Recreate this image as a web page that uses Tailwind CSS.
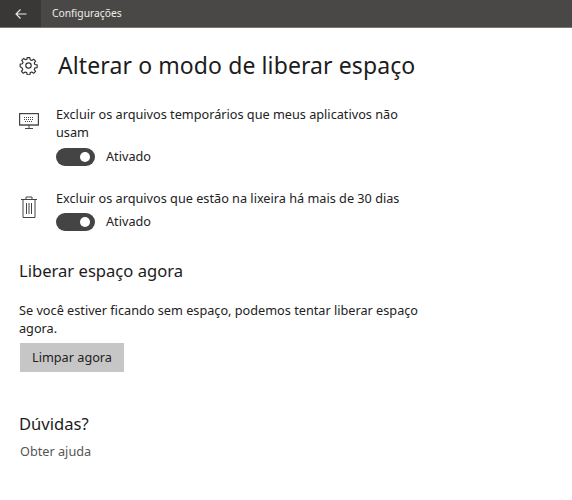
<!DOCTYPE html>
<html lang="pt"><head><meta charset="utf-8"><script src="https://cdn.jsdelivr.net/npm/@tailwindcss/browser@4"></script></head>
<body class="bg-white w-[572px] h-[500px] overflow-hidden font-['Noto_Sans','Open_Sans',sans-serif] text-[#222]">
<header class="h-[28px] bg-[#4a4846] flex items-center border-b border-[#777]">
  <div class="w-[41px] h-full bg-[#3a3836] flex items-center justify-center">
    <svg width="12" height="12" viewBox="0 0 12 12" fill="none" stroke="#eee" stroke-width="1.1"><path d="M11.500 6H1M5.500 1.500 1 6l4.500 4.500"/></svg>
  </div>
  <span class="ml-[11px] text-[10.3px] text-[#eee]">Configurações</span>
</header>
<main class="pl-[19px]">
  <div class="flex items-center mt-[22px] h-[30px]">
    <svg width="19" height="19" viewBox="0 0 24 24" fill="none" stroke="#333" stroke-width="1.5" stroke-linejoin="round"><circle cx="12" cy="12" r="3.4"/><path d="M10.300 2h3.400l.5 2.800 1.900.8 2.400-1.600 2.400 2.400-1.600 2.400.8 1.900 2.800.5v3.400l-2.800.5-.8 1.900 1.600 2.400-2.400 2.400-2.400-1.600-1.900.8-.5 2.800h-3.400l-.5-2.800-1.900-.8-2.400 1.600-2.400-2.400 1.600-2.400-.8-1.900L1.500 13.700v-3.400l2.800-.5.8-1.900L3.500 5.500l2.400-2.400 2.400 1.600 1.900-.8z"/></svg>
    <h1 class="ml-[20px] text-[23px] leading-[30px] text-[#1c1c1c] tracking-[0.1px]">Alterar o modo de liberar espaço</h1>
  </div>
  <section class="flex mt-[25px]">
    <svg class="mt-[8px] shrink-0" width="20" height="18" viewBox="0 0 20 18" fill="none" stroke="#444"><rect x=".5" y=".5" width="19" height="11.500" stroke-width="1.400"/><path d="M10 12v3M6 15.500h8"/><path d="M5 4.500h10M5 6.500h10M6 8.500h8" stroke-dasharray="1 1"/></svg>
    <div class="ml-[17px]">
      <p class="w-[352px] text-[12.7px] leading-[18px]">Excluir os arquivos temporários que meus aplicativos não usam</p>
      <div class="flex items-center mt-[6px]">
        <div class="w-[39px] h-[18px] rounded-full bg-[#444] flex items-center justify-end pr-[5px]"><span class="w-[10px] h-[10px] rounded-full bg-white"></span></div>
        <span class="ml-[11px] text-[12.7px]">Ativado</span>
      </div>
    </div>
  </section>
  <section class="flex mt-[23px]">
    <svg class="mt-[7px] ml-[2px] mr-[2px] shrink-0" width="16" height="22" viewBox="0 0 16 22" fill="none" stroke="#444"><path d="M0 3.500h16M5 3.500V1h6v2.500M2 3.500v18h12v-18M5.500 7v11M8 7v11M10.500 7v11"/></svg>
    <div class="ml-[17px]">
      <p class="text-[12.7px] leading-[18px]">Excluir os arquivos que estão na lixeira há mais de 30 dias</p>
      <div class="flex items-center mt-[5px]">
        <div class="w-[39px] h-[18px] rounded-full bg-[#444] flex items-center justify-end pr-[5px]"><span class="w-[10px] h-[10px] rounded-full bg-white"></span></div>
        <span class="ml-[11px] text-[12.7px]">Ativado</span>
      </div>
    </div>
  </section>
  <h2 class="mt-[29px] text-[16.600px] leading-[22px] text-[#1c1c1c]">Liberar espaço agora</h2>
  <p class="mt-[19px] w-[410px] text-[12.7px] leading-[18px]">Se você estiver ficando sem espaço, podemos tentar liberar espaço agora.</p>
  <button class="block mt-[6px] ml-px w-[104px] h-[29px] bg-[#c6c6c6] text-[12.7px] text-[#222]">Limpar agora</button>
  <h2 class="mt-[40px] text-[16.600px] leading-[24px] text-[#1c1c1c]">Dúvidas?</h2>
  <a class="block mt-[6px] ml-px text-[12.7px] leading-[18px] text-[#555]">Obter ajuda</a>
</main>
</body></html>
